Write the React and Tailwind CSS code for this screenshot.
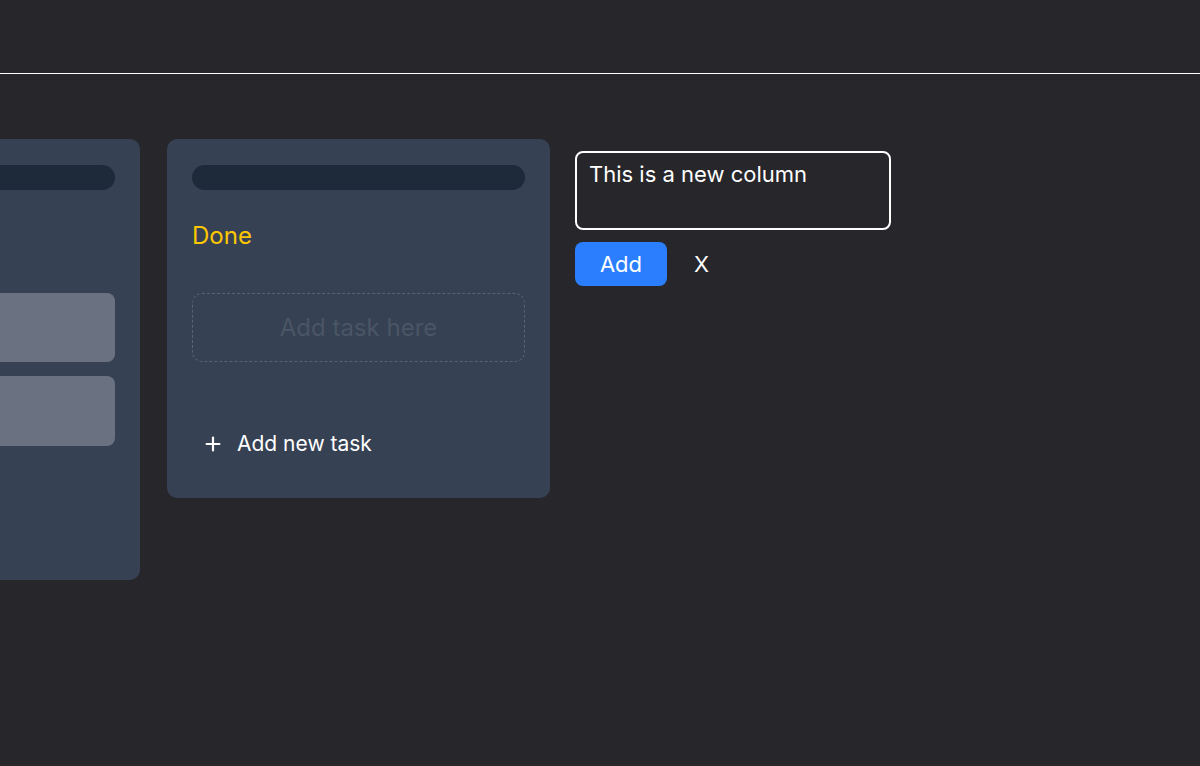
import { useEffect, useRef } from "react";
import { Plus } from "lucide-react";

function Column({ title, children, footer = true, className = "" }) {
  return (
    <div className={`w-[383px] shrink-0 rounded-[10px] bg-gray-700 px-[25px] pt-[26px] ${className}`}>
      <div className="h-[25px] rounded-full bg-gray-800" />
      {title ? (
        <h2 className="mt-[30px] text-[24px] leading-8 text-yellow-400">{title}</h2>
      ) : (
        <div className="mt-[30px] h-8" />
      )}
      {children}
      {footer && (
        <button className="mt-[66px] flex items-center gap-[13px] pl-[10px] text-[21px] text-white">
          <Plus size={22} strokeWidth={2.4} />
          Add new task
        </button>
      )}
    </div>
  );
}

export default function App() {
  const inputRef = useRef(null);

  useEffect(() => {
    const el = inputRef.current;
    if (!el) return;
    el.focus();
    el.setSelectionRange(el.value.length, el.value.length);
  }, []);

  return (
    <div className="h-screen overflow-hidden bg-[#26262b] font-['Inter','Liberation_Sans',sans-serif]">
      <header className="h-[74px] border-b border-white" />
      <main className="ml-[-243px] flex items-start gap-[27px] pt-[65px]">
        {/* scrolled partly out of view */}
        <Column footer={false} className="h-[441px]">
          <div className="mt-[41px] space-y-[14px]">
            <div className="h-[69px] rounded-lg bg-gray-500" />
            <div className="h-[70px] rounded-lg bg-gray-500" />
          </div>
        </Column>

        <Column title="Done" className="pb-[38px]">
          <div className="mt-[41px] flex h-[69px] items-center justify-center rounded-[10px] border border-dashed border-gray-500/70 text-[24px] text-gray-600">
            Add task here
          </div>
        </Column>

        <div className="mt-[12px] -ml-[2px] w-[316px]">
          <textarea
            ref={inputRef}
            defaultValue="This is a new column"
            className="block h-[79px] w-full resize-none rounded-lg border-2 border-white bg-transparent px-[12px] pt-[7px] text-[22px] leading-7 text-white caret-white outline-none"
          />
          <div className="mt-[12px] flex items-center gap-[27px]">
            <button className="h-[44px] w-[92px] rounded-lg bg-blue-500 text-[22px] text-white">Add</button>
            <button className="text-[22px] text-white">X</button>
          </div>
        </div>
      </main>
    </div>
  );
}
